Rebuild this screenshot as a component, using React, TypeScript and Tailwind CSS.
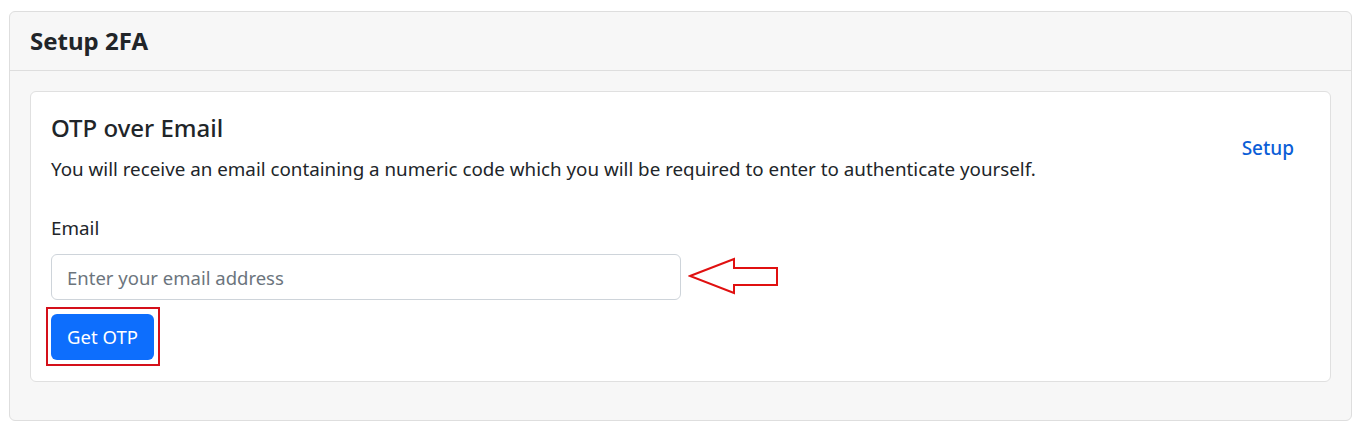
export default function App() {
  return (
    <div className="min-h-[432px] bg-white pt-[11px] pl-[9px] pr-[9px] font-['Noto_Sans',sans-serif] text-[#212529]">
      <div className="border border-[#dedede] rounded-[6px] bg-[#f7f7f7] h-[410px]">
        <div className="h-[59px] border-b border-[#dedede] px-[20px] flex items-center">
          <h5 className="text-[24px] font-bold leading-none">Setup 2FA</h5>
        </div>
        <div className="p-[20px]">
          <div className="bg-white border border-[#e0e0e0] rounded-[6px] pt-[20px] pb-[20px] px-[20px] h-[291px]">
            <div className="flex items-start justify-between">
              <div>
                <h4 className="text-[24px] font-medium leading-[32px] mb-[11px]">OTP over Email</h4>
                <p className="text-[18.8px] leading-[28px]">
                  You will receive an email containing a numeric code which you will be required to enter to authenticate yourself.
                </p>
              </div>
              <a className="text-[19px] font-medium text-[#0b5ed7] mt-[22px] mr-[16px]" href="#">Setup</a>
            </div>
            <label className="block text-[18.8px] leading-[28px] mt-[31px] mb-[12px]">Email</label>
            <div className="flex items-center">
              <input
                className="w-[630px] h-[46px] border border-[#ced4da] rounded-[6px] px-[15px] text-[18.5px] placeholder:text-[#6c757d] outline-none"
                placeholder="Enter your email address"
              />
              <svg width="92" height="40" viewBox="0 0 92 40" className="ml-[7px]">
                <polygon
                  points="2,19 46,2 46,11 89,11 89,28 46,28 46,36"
                  fill="none"
                  stroke="#e01010"
                  strokeWidth="2"
                />
              </svg>
            </div>
            <div className="mt-[7px] -ml-[5px] inline-block border-2 border-[#d4101a] pt-[5px] pb-[4px] pl-[3px] pr-[4px]">
              <button className="block bg-[#0d6efd] text-white rounded-[6px] w-[103px] h-[46px] text-[18.5px]">
                Get OTP
              </button>
            </div>
          </div>
        </div>
      </div>
    </div>
  );
}
